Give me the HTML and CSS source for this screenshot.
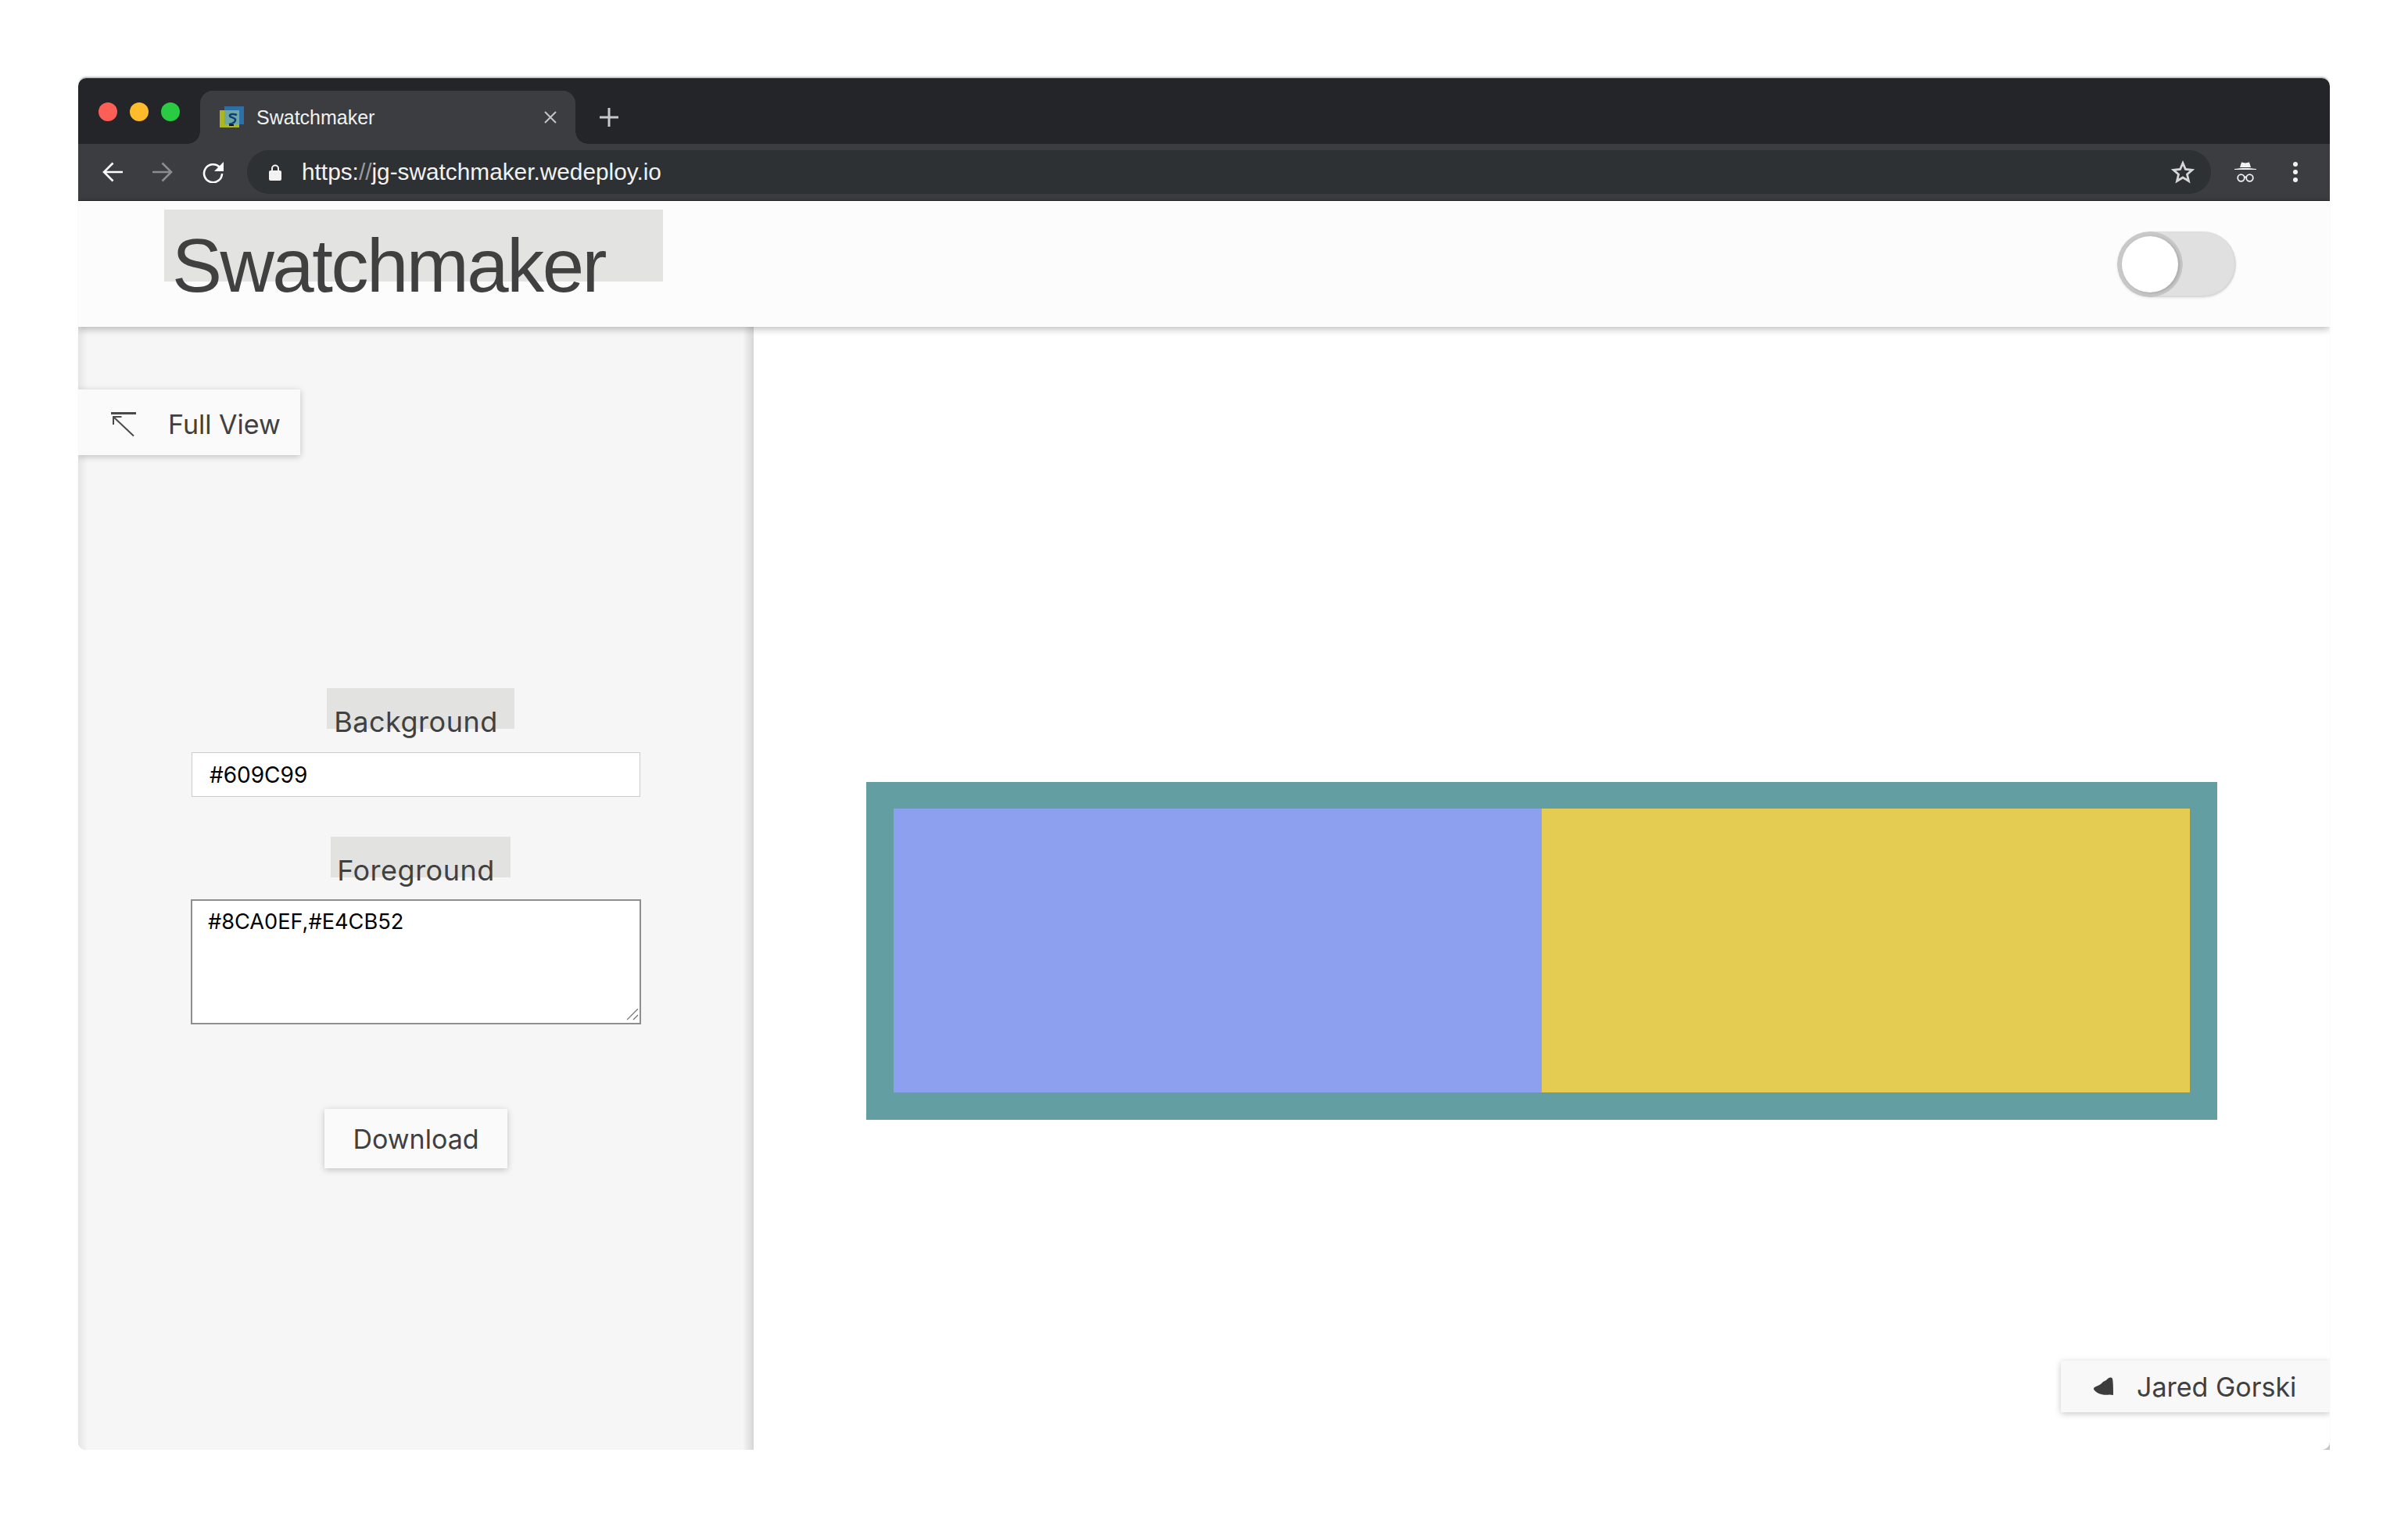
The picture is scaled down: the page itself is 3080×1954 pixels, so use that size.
FILE: index.html
```html
<!DOCTYPE html>
<html lang="en">
  <head>
    <meta charset="UTF-8" />
    <title>Swatchmaker</title>
    <link rel="stylesheet" href="styles.css">
  </head>
  <body>
    <div class="window">
      <!-- browser chrome -->
      <div class="tabstrip">
        <div class="lights">
          <span class="light red"></span>
          <span class="light yellow"></span>
          <span class="light green"></span>
        </div>
        <div class="tab">
          <svg class="favicon" viewBox="0 0 31 27" width="31" height="27">
            <rect x="0" y="5" width="25" height="22" fill="#adb51f"/>
            <rect x="6" y="0" width="25" height="23" fill="#2f6fa8"/>
            <rect x="6" y="5" width="19" height="18" fill="#6fa8a0"/>
            <path d="M22 11c-5-2-10-1-9 1.500s8 1.500 7 5.500-5 4-8 5" fill="none" stroke="#123a80" stroke-width="2.500"/>
            <path d="M12 23h6v2h-6z" fill="#111"/>
          </svg>
          <span class="tab-title">Swatchmaker</span>
          <svg class="tab-close" viewBox="0 0 16 16" width="16" height="16">
            <path d="M1 1l14 14M15 1L1 15" stroke="#c4c5c6" stroke-width="2" fill="none"/>
          </svg>
        </div>
        <svg class="newtab" viewBox="0 0 24 24" width="24" height="24">
          <path d="M12 0v24M0 12h24" stroke="#c8c9ca" stroke-width="3" fill="none"/>
        </svg>
      </div>
      <div class="toolbar">
        <svg class="nav-icon" viewBox="0 0 26 26" width="26" height="26">
          <path d="M26 13H3M13.500 1.500L2 13l11.500 11.500" stroke="#fff" stroke-width="2.600" fill="none"/>
        </svg>
        <svg class="nav-icon" viewBox="0 0 26 26" width="26" height="26">
          <path d="M0 13h23M12.500 1.500L24 13 12.500 24.500" stroke="#8b8c8d" stroke-width="2.600" fill="none"/>
        </svg>
        <svg class="nav-icon reload" viewBox="0 0 27 27" width="27" height="27">
          <path d="M22 7a11.500 11.500 0 1 0 3 8" stroke="#fff" stroke-width="2.600" fill="none"/>
          <path d="M27 0v12H15z" fill="#fff"/>
        </svg>
        <div class="omnibox">
          <svg class="lock" viewBox="0 0 16 21" width="16" height="21">
            <path d="M4 9V5.500a4 4 0 0 1 8 0V9" stroke="#f2f2f2" stroke-width="2" fill="none"/>
            <rect x="0" y="8" width="16" height="13" rx="2" fill="#f2f2f2"/>
          </svg>
          <span class="url">https:<span class="url-dim">//</span>jg-swatchmaker.wedeploy.io</span>
          <svg class="star" viewBox="0 0 30 30" width="30" height="30">
            <path d="M15 3.500l3.400 8 8.600.8-6.500 5.700 2 8.500-7.500-4.500-7.500 4.500 2-8.500L3 12.300l8.600-.8z" fill="none" stroke="#d5d6d6" stroke-width="2.800"/>
          </svg>
        </div>
        <svg class="incognito" viewBox="0 0 28 26" width="28" height="26">
          <path d="M9 0.500l5 1 5-1 2 6.500H7zM0 9c8-1.500 20-1.500 28 0v1H0z" fill="#f2f2f2"/>
          <circle cx="8.500" cy="20.500" r="4.300" fill="none" stroke="#f2f2f2" stroke-width="1.800"/>
          <circle cx="19.500" cy="20.500" r="4.300" fill="none" stroke="#f2f2f2" stroke-width="1.800"/>
          <path d="M12 19.500h4" stroke="#f2f2f2" stroke-width="1.800"/>
        </svg>
        <div class="menu-dots"><span></span><span></span><span></span></div>
      </div>

      <!-- page -->
      <div class="page">
        <header class="app-header">
          <div class="title-box"><h1 class="title">Swatchmaker</h1></div>
          <div class="toggle"><span class="knob"></span></div>
        </header>
        <div class="content">
          <aside class="sidebar">
            <button class="tile-btn full-view">
              <svg viewBox="0 0 32 32" width="32" height="32">
                <path d="M0 1.500h32" stroke="#4a4a4a" stroke-width="3" fill="none"/>
                <path d="M29 30.500L3 6M3 16V6h10.500" stroke="#4a4a4a" stroke-width="2" fill="none"/>
              </svg>
              <span>Full View</span>
            </button>
            <div class="form">
              <label class="field-label bg-label" for="bg">Background</label>
              <input class="hex-input" id="bg" type="text" value="#609C99" />
              <label class="field-label fg-label" for="fg">Foreground</label>
              <div class="area-wrap">
                <textarea class="hex-area" id="fg">#8CA0EF,#E4CB52</textarea>
                <svg class="grip" viewBox="0 0 15 15" width="15" height="15">
                  <path d="M0 14L14 0M8 14l6-6" stroke="#6f6f6f" stroke-width="1.200" fill="none"/>
                </svg>
              </div>
              <button class="tile-btn download">Download</button>
            </div>
          </aside>
          <main class="preview">
            <div class="swatch">
              <div class="chip chip-blue"></div>
              <div class="chip chip-yellow"></div>
            </div>
          </main>
          <a class="tile-btn credit">
            <svg viewBox="0 0 25 24" width="25" height="24">
              <path d="M0 15c0-1.500 1-2 3-3 3-1.500 6-2.500 8-5 2-2 4-2 6-4 2-3 6-3.500 7-1 1 5 1 14 1 21l-5-.5c-6 1-14 0-19-5.500-1-1-1-1.500-1-2.500z" fill="#3d3d3d"/>
            </svg>
            <span>Jared Gorski</span>
          </a>
        </div>
      </div>
    </div>
  </body>
</html>
```

FILE: styles.css
```css
html,
body {
  margin: 0;
  height: 100%;
}
body {
  width: 3080px;
  height: 1954px;
  overflow: hidden;
  background-color: #fff;
  font-family: Inter, "Liberation Sans", sans-serif;
  color: #404040;
}
.window {
  width: 2880px;
  height: 1754px;
  margin: 100px 0 0 100px;
  display: flex;
  flex-direction: column;
  border-radius: 10px 10px 0 10px;
  overflow: hidden;
  box-shadow: 0 -3px 3px -2px rgba(0, 0, 0, 0.45);
}

/* browser chrome */
.tabstrip {
  height: 84px;
  flex: none;
  display: flex;
  background-color: #232528;
}
.lights {
  width: 156px;
  box-sizing: border-box;
  padding: 31px 0 0 26px;
  display: flex;
  gap: 16px;
}
.light {
  width: 24px;
  height: 24px;
  border-radius: 50%;
}
.red {
  background-color: #fd5f57;
}
.yellow {
  background-color: #febc2c;
}
.green {
  background-color: #28cb42;
}
.tab {
  position: relative;
  width: 480px;
  height: 68px;
  margin-top: 16px;
  box-sizing: border-box;
  padding: 0 24px 0 25px;
  display: flex;
  align-items: center;
  background-color: #3c3d40;
  border-radius: 16px 16px 0 0;
}
.tab::before,
.tab::after {
  content: "";
  position: absolute;
  bottom: 0;
  width: 16px;
  height: 16px;
}
.tab::before {
  left: -16px;
  background: radial-gradient(circle at 0 0, #232528 15.500px, #3c3d40 16px);
}
.tab::after {
  right: -16px;
  background: radial-gradient(circle at 100% 0, #232528 15.500px, #3c3d40 16px);
}
.favicon {
  margin-right: 16px;
  margin-top: -1px;
}
.tab-title {
  flex: 1;
  color: #f0f0f0;
  font-family: "Liberation Sans", sans-serif;
  font-size: 25px;
}
.newtab {
  margin: 38px 0 0 31px;
}
.toolbar {
  height: 73px;
  flex: none;
  box-sizing: border-box;
  padding: 8px 0 0 31px;
  display: flex;
  align-items: flex-start;
  background-color: #3c3d40;
  border-bottom: 1px solid #26272a;
}
.nav-icon {
  margin: 15px 38px 0 0;
}
.nav-icon.reload {
  margin-right: 30px;
}
.omnibox {
  width: 2512px;
  height: 56px;
  box-sizing: border-box;
  padding-left: 28px;
  display: flex;
  align-items: center;
  border-radius: 28px;
  background-color: #2d3134;
}
.lock {
  margin-right: 26px;
}
.url {
  flex: 1;
  color: #f2f2f2;
  font-family: "Liberation Sans", sans-serif;
  font-size: 29.800px;
}
.url-dim {
  color: #9a9b9c;
}
.star {
  margin-right: 21px;
}
.incognito {
  margin: 15px 0 0 30px;
}
.menu-dots {
  margin: 15px 0 0 47px;
  display: flex;
  flex-direction: column;
  gap: 4px;
}
.menu-dots span {
  width: 6px;
  height: 6px;
  border-radius: 50%;
  background-color: #f2f2f2;
}

/* page */
.page {
  flex: 1;
  min-height: 0;
  display: flex;
  flex-direction: column;
}
.app-header {
  height: 161px;
  flex: none;
  position: relative;
  z-index: 2;
  box-sizing: border-box;
  padding: 11px 120px 0 110px;
  display: flex;
  justify-content: space-between;
  background-color: #fcfcfc;
  box-shadow: 0 2px 10px rgba(0, 0, 0, 0.3);
}
.title-box {
  width: 638px;
  height: 92px;
  background-color: #e3e3e2;
}
.title {
  margin: 17px 0 0 10px;
  font-family: "Liberation Sans", sans-serif;
  font-size: 96px;
  font-weight: 400;
  line-height: 110px;
  letter-spacing: -2.500px;
  color: #404040;
}
.toggle {
  box-sizing: border-box;
  width: 152px;
  height: 84px;
  margin-top: 28px;
  padding: 6px;
  border-radius: 42px;
  background: radial-gradient(circle at 42px 42px, #c9c9c9 41.500px, transparent 42px), #e0e0e0;
  box-shadow: 0 1px 3px rgba(0, 0, 0, 0.1), inset -1px -1px 3px rgba(0, 0, 0, 0.06);
}
.knob {
  display: block;
  width: 72px;
  height: 72px;
  border-radius: 50%;
  background-color: #fff;
  box-shadow: 2px 1px 4px rgba(0, 0, 0, 0.18);
}
.content {
  flex: 1;
  min-height: 0;
  position: relative;
  display: flex;
  background-color: #c4c4c4;
}
.sidebar {
  width: 864px;
  flex: none;
  box-sizing: border-box;
  padding-top: 80px;
  background: linear-gradient(to right, rgba(0, 0, 0, 0.07), transparent 12px, transparent calc(100% - 14px), rgba(0, 0, 0, 0.13)), #f6f6f6;
}
.tile-btn {
  display: flex;
  align-items: center;
  box-sizing: border-box;
  border: none;
  padding: 0;
  background-color: #fafafa;
  color: #404040;
  font-family: Inter, "Liberation Sans", sans-serif;
  font-size: 34px;
  box-shadow: 0 2px 8px rgba(0, 0, 0, 0.22);
}
.full-view {
  width: 284px;
  height: 84px;
  padding: 5px 0 0 42px;
  gap: 41px;
}
.form {
  margin-top: 298px;
  display: flex;
  flex-direction: column;
  align-items: center;
}
.field-label {
  height: 52px;
  box-sizing: border-box;
  margin-left: 12px;
  padding: 21px 12px 0 0;
  font-size: 36px;
  line-height: 44px;
  letter-spacing: 0.500px;
  background-color: #e2e2e0;
  text-align: center;
  white-space: nowrap;
}
.bg-label {
  width: 240px;
}
.fg-label {
  width: 230px;
  margin-top: 51px;
}
.hex-input {
  box-sizing: border-box;
  width: 574px;
  height: 57px;
  margin-top: 30px;
  padding: 0 22px;
  border: 1px solid #ccc;
  background-color: #fff;
  font-family: Inter, "Liberation Sans", sans-serif;
  font-size: 28px;
  color: #000;
}
.area-wrap {
  position: relative;
  width: 576px;
  height: 160px;
  margin-top: 28px;
}
.hex-area {
  display: block;
  box-sizing: border-box;
  width: 100%;
  height: 100%;
  padding: 10px 20px;
  border: 2px solid #8e8e8e;
  resize: none;
  background-color: #fff;
  font-family: Inter, "Liberation Sans", sans-serif;
  font-size: 27.200px;
  color: #000;
}
.grip {
  position: absolute;
  right: 3px;
  bottom: 5px;
}
.download {
  width: 234px;
  height: 76px;
  margin-top: 108px;
  justify-content: center;
}
.preview {
  flex: 1;
  display: flex;
  justify-content: center;
  background-color: #fff;
  border-radius: 0 0 10px 0;
}
.swatch {
  box-sizing: border-box;
  width: 1728px;
  height: 432px;
  margin-top: 582px;
  padding: 34px 35px 35px;
  display: flex;
  background-color: #639ea2;
}
.chip {
  flex: 1;
}
.chip-blue {
  background-color: #8ca0ef;
}
.chip-yellow {
  background-color: #e4cb52;
}
.credit {
  position: absolute;
  right: 0;
  bottom: 48px;
  width: 344px;
  height: 66px;
  padding-left: 42px;
  gap: 30px;
  background-color: #f8f8f8;
}
```
